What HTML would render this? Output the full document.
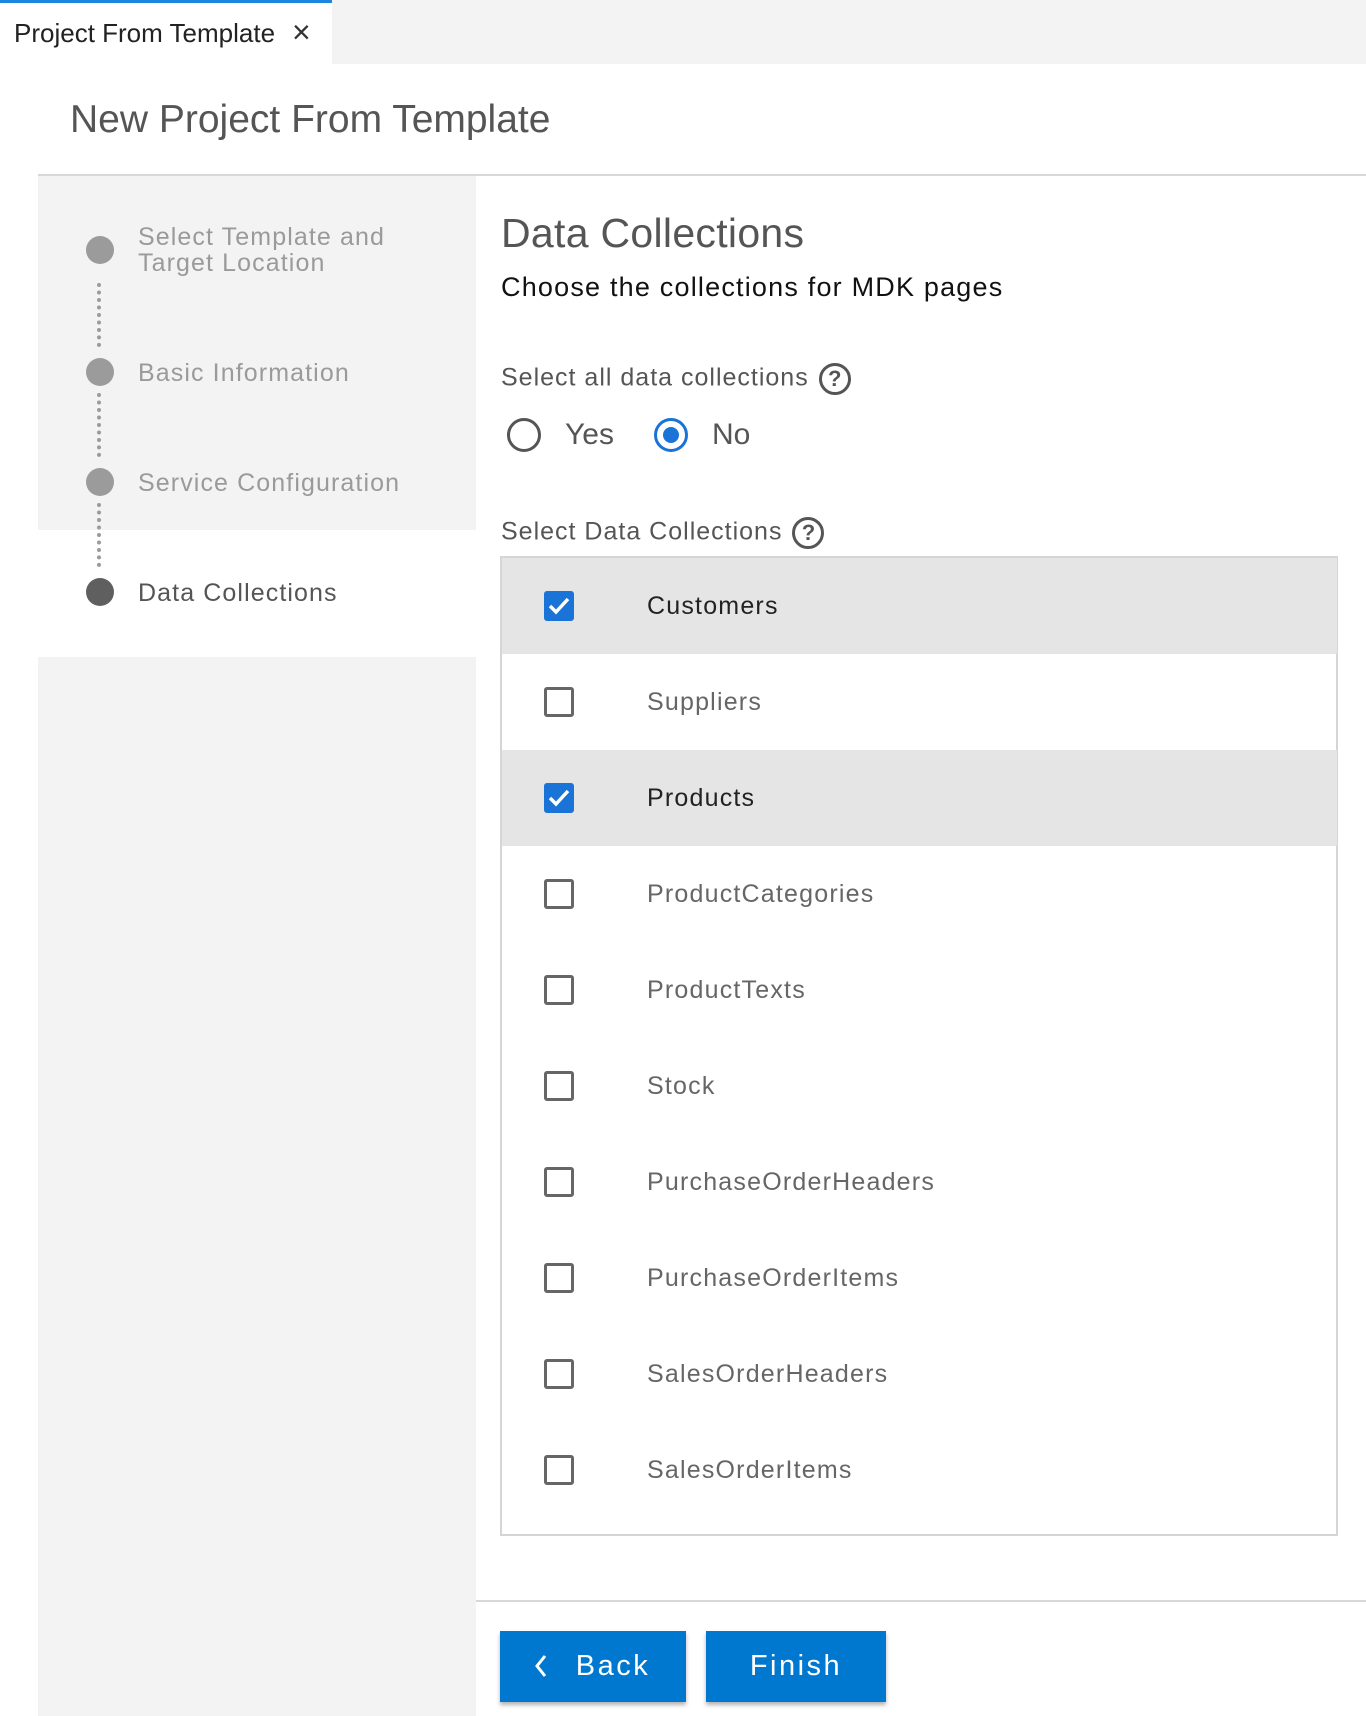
<!DOCTYPE html>
<html><head><meta charset="utf-8"><style>
*{box-sizing:border-box;margin:0;padding:0}
body{width:1366px;height:1716px;position:relative;background:#fff;font-family:"Liberation Sans",sans-serif;overflow:hidden}
.a{position:absolute;white-space:nowrap}
.dot{position:absolute;width:28px;height:28px;border-radius:50%;background:#9b9b9b;left:86px}
.vd{position:absolute;left:97px;width:6px;border-left:4px dotted #9b9b9b}
.st{position:absolute;left:138px;font-size:25px;color:#9a9a9a;line-height:26px;letter-spacing:1.1px}
.row{position:absolute;left:502px;width:835px;height:96px}
.row.sel{background:#e5e5e5}
.cb{position:absolute;left:42px;top:33px;width:30px;height:30px;border:3px solid #666;border-radius:3px;background:#fff}
.row.sel .cb{background:#1a73d6;border-color:#1a73d6}
.row.sel .cb svg{position:absolute;left:-3px;top:-3px}
.row span{position:absolute;left:145px;top:0;line-height:96px;font-size:25px;color:#666;letter-spacing:1.2px}
.row.sel span{color:#222}
.btn{position:absolute;top:1631px;height:71px;background:#0078cf;color:#fff;font-size:29px;letter-spacing:2.5px;line-height:71px;text-align:center;box-shadow:0 3px 4px rgba(0,0,0,.3)}
.q{display:inline-block;width:32px;height:32px;border:3px solid #555;border-radius:50%;text-align:center;line-height:26px;font-size:22px;color:#555;font-weight:bold;vertical-align:middle;margin-left:10px;letter-spacing:0}
</style></head><body>
<div class="a" style="left:332px;top:0;width:1034px;height:64px;background:#f3f3f3"></div>
<div class="a" style="left:0;top:0;width:332px;height:3px;background:#1a86e0"></div>
<div class="a" style="left:14px;top:18px;font-size:26px;color:#222">Project From Template</div>
<div class="a" style="left:292px;top:14px;font-size:32px;color:#333">×</div>
<div class="a" style="left:70px;top:98px;font-size:39px;color:#555">New Project From Template</div>
<div class="a" style="left:38px;top:174px;width:1328px;height:2px;background:#d8d8d8"></div>
<div class="a" style="left:38px;top:176px;width:438px;height:354px;background:#f3f3f3"></div>
<div class="a" style="left:38px;top:657px;width:438px;height:1059px;background:#f3f3f3"></div>
<div class="dot" style="top:236px"></div>
<div class="dot" style="top:358px"></div>
<div class="dot" style="top:468px"></div>
<div class="dot" style="top:578px;background:#5f5f5f"></div>
<div class="vd" style="top:283px;height:64px"></div>
<div class="vd" style="top:393px;height:64px"></div>
<div class="vd" style="top:503px;height:64px"></div>
<div class="st" style="top:224px">Select Template and<br>Target Location</div>
<div class="st" style="top:360px">Basic Information</div>
<div class="st" style="top:470px">Service Configuration</div>
<div class="st" style="top:580px;color:#555">Data Collections</div>
<div class="a" style="left:501px;top:210px;font-size:41px;color:#555;letter-spacing:.3px">Data Collections</div>
<div class="a" style="left:501px;top:272px;font-size:27px;color:#111;letter-spacing:1.2px">Choose the collections for MDK pages</div>
<div class="a" style="left:501px;top:363px;font-size:25px;color:#555;letter-spacing:1px">Select all data collections<span class="q">?</span></div>
<div class="a" style="left:507px;top:418px;width:34px;height:34px;border:3px solid #555;border-radius:50%"></div>
<div class="a" style="left:565px;top:418px;font-size:30px;color:#555">Yes</div>
<div class="a" style="left:654px;top:418px;width:34px;height:34px;border:3px solid #1a73d6;border-radius:50%"><div style="margin:6px;width:16px;height:16px;border-radius:50%;background:#1a73d6"></div></div>
<div class="a" style="left:712px;top:418px;font-size:30px;color:#555">No</div>
<div class="a" style="left:501px;top:517px;font-size:25px;color:#555;letter-spacing:1px">Select Data Collections<span class="q">?</span></div>
<div class="a" style="left:500px;top:556px;width:838px;height:980px;border:2px solid #d5d5d5"></div>
<div class="row sel" style="top:558px"><div class="cb"><svg width="30" height="30" viewBox="0 0 30 30"><path d="M6 15l6 6 12-13" stroke="#fff" stroke-width="3.5" fill="none"/></svg></div><span>Customers</span></div>
<div class="row" style="top:654px"><div class="cb"></div><span>Suppliers</span></div>
<div class="row sel" style="top:750px"><div class="cb"><svg width="30" height="30" viewBox="0 0 30 30"><path d="M6 15l6 6 12-13" stroke="#fff" stroke-width="3.5" fill="none"/></svg></div><span>Products</span></div>
<div class="row" style="top:846px"><div class="cb"></div><span>ProductCategories</span></div>
<div class="row" style="top:942px"><div class="cb"></div><span>ProductTexts</span></div>
<div class="row" style="top:1038px"><div class="cb"></div><span>Stock</span></div>
<div class="row" style="top:1134px"><div class="cb"></div><span>PurchaseOrderHeaders</span></div>
<div class="row" style="top:1230px"><div class="cb"></div><span>PurchaseOrderItems</span></div>
<div class="row" style="top:1326px"><div class="cb"></div><span>SalesOrderHeaders</span></div>
<div class="row" style="top:1422px"><div class="cb"></div><span>SalesOrderItems</span></div>
<div class="a" style="left:476px;top:1600px;width:890px;height:2px;background:#d8d8d8"></div>
<div class="btn" style="left:500px;width:186px"><svg style="position:absolute;left:34px;top:23px" width="14" height="24" viewBox="0 0 14 24"><path d="M11 2L3 12l8 10" stroke="#fff" stroke-width="3" fill="none"/></svg><span style="margin-left:40px">Back</span></div>
<div class="btn" style="left:706px;width:180px">Finish</div>
</body></html>
